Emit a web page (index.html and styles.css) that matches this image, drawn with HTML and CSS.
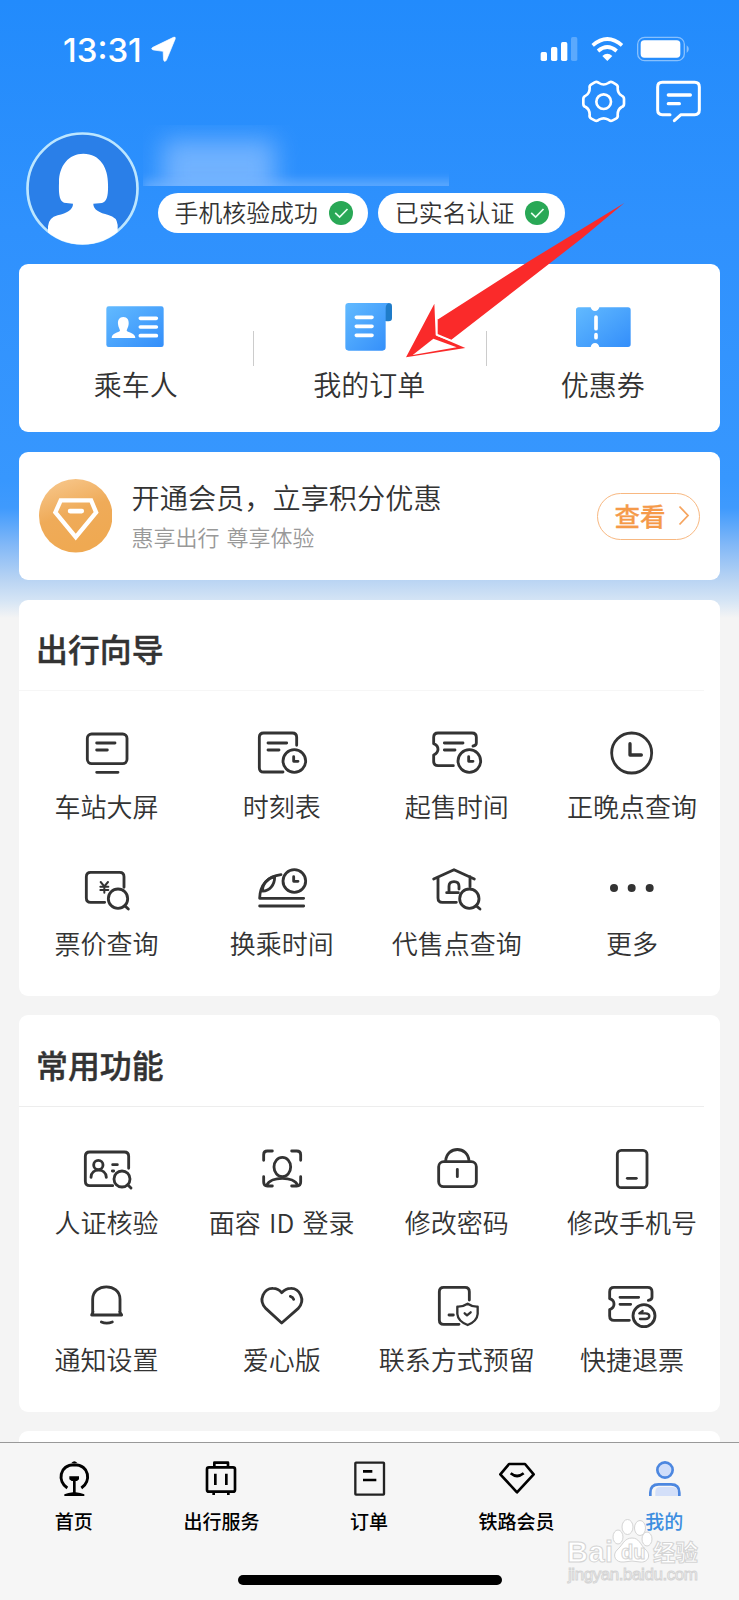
FILE: index.html
```html
<!DOCTYPE html>
<html lang="zh-CN">
<head>
<meta charset="utf-8">
<title>我的</title>
<link rel="stylesheet" href="styles.css">
</head>
<body>
<div class="phone">
  <div class="content">
    <header class="header">
      <div class="status">
        <span class="time">13:31</span>
        <svg class="locate" viewBox="450 106 80 84"><path d="M458 143 L520 113 Q527 110 525 118 L499 181 Q493 190 490 180 L489 155 L460 151 Q450 148 458 143Z" fill="#fff" stroke="#fff" stroke-width="2"/></svg>
        <svg class="signals" viewBox="510 105 480 90">
          <g fill="#fff">
            <rect x="515" y="156" width="19" height="27" rx="5"/><rect x="546" y="141" width="19" height="42" rx="5"/><rect x="576" y="126" width="19" height="57" rx="5"/>
            <rect x="606" y="111" width="19" height="72" rx="5" opacity=".25"/>
            <path d="M700 168 Q715 155 730 168 L715 183Z"/>
            <rect x="815" y="121" width="119" height="52" rx="11"/>
            <path d="M953 136 Q966 147 953 159Z" opacity=".45"/>
          </g>
          <g fill="none" stroke="#fff" stroke-width="11"><path d="M671 136 Q715 98 759 136"/><path d="M687 153 Q715 129 743 153"/></g>
          <rect x="806" y="112" width="140" height="70" rx="21" fill="none" stroke="#fff" stroke-width="4" opacity=".45"/>
        </svg>
      </div>
      <div class="actions">
        <svg viewBox="636 237 138 135" fill="none" stroke="#fff" stroke-width="8" stroke-linejoin="round"><path d="M677 247 Q684 243 690 249 Q704 258 718 249 Q724 243 731 247 L741 253 Q748 257 746 265 Q746 281 758 287 Q765 289 765 297 V311 Q765 319 758 321 Q746 328 746 344 Q748 352 741 356 L731 361 Q724 365 718 359 Q704 351 690 359 Q684 365 677 361 L667 356 Q660 352 662 344 Q662 328 650 321 Q643 319 643 311 V297 Q643 289 650 287 Q662 281 662 265 Q660 257 667 253Z"/><circle cx="704" cy="305" r="22"/></svg>
        <svg viewBox="858 237 138 135" fill="none" stroke="#fff" stroke-width="9" stroke-linecap="round" stroke-linejoin="round"><path d="M903 344 H880 Q866 344 866 330 V261 Q866 247 880 247 H977 Q991 247 991 261 V330 Q991 344 977 344 H936 L916 362"/><path d="M898 285 H964 M898 311 H931" stroke-width="10"/></svg>
      </div>
      <div class="profile">
        <svg class="avatar" viewBox="78 397 339 339"><defs><clipPath id="face"><circle cx="247.500" cy="566.500" r="168"/></clipPath></defs><circle cx="247.500" cy="566.500" r="165" fill="#2a7fe8" stroke="#bce6ff" stroke-width="8"/><g clip-path="url(#face)"><path d="M250 462 C301 462 324 505 324 553 C325 584 322 607 306 610 L280 612 C279 630 298 640 325 646 Q351 652 353 676 V740 H144 V680 Q146 654 173 647 C201 640 219 630 219 612 L192 609 C177 603 176 580 177 550 C176 500 205 462 250 462Z" fill="#fff"/></g></svg>
        <div class="info">
          <div class="masked"><i></i><b></b></div>
          <div class="badges">
            <span class="badge"><em>手机核验成功</em><svg viewBox="0 0 24 24"><circle cx="12" cy="12" r="12" fill="#29a856"/><path d="M6.200 11.800 L10.600 16 L18.500 8" fill="none" stroke="#e8fff0" stroke-width="1.700"/></svg></span>
            <span class="badge"><em>已实名认证</em><svg viewBox="0 0 24 24"><circle cx="12" cy="12" r="12" fill="#29a856"/><path d="M6.200 11.800 L10.600 16 L18.500 8" fill="none" stroke="#e8fff0" stroke-width="1.700"/></svg></span>
          </div>
        </div>
      </div>
    </header>

    <section class="card quick">
      <div class="entry">
        <svg viewBox="319 128 180 165"><defs><linearGradient id="sky" x1="0" y1="0" x2="1" y2="1"><stop offset="0" stop-color="#62baff"/><stop offset="1" stop-color="#338efa"/></linearGradient></defs><rect x="320" y="153" width="172" height="122" rx="7" fill="url(#sky)"/><path d="M371 185 C383 185 388 194 387 206 C386 216 382 220 381 226 C386 233 407 231 407 248 H336 C336 231 357 233 361 226 C360 220 356 216 355 206 C354 194 359 185 371 185Z" fill="#fff"/><path d="M422 189 H470 M422 215 H470 M422 241 H470" stroke="#fff" stroke-width="11" stroke-linecap="round"/></svg>
        <span>乘车人</span>
      </div>
      <div class="entry">
        <svg viewBox="-88 324 180 165"><rect x="45" y="339" width="26" height="55" rx="10" fill="#1f7cc9"/><path d="M-59 339 H62 Q52 342 52 355 V472 Q52 482 42 482 H-59 Q-69 482 -69 472 V349 Q-69 339 -59 339Z" fill="url(#sky)"/><path d="M-36 382 H11 M-36 409 H11 M-36 436 H11" stroke="#fff" stroke-width="11" stroke-linecap="round"/></svg>
        <span>我的订单</span>
      </div>
      <div class="entry">
        <svg viewBox="612 323 180 165"><path d="M629 351 H665 Q668 362 678 362 Q688 362 691 351 H777 Q785 351 785 359 V462 Q785 470 777 470 H691 Q688 458 678 458 Q668 458 665 470 H629 Q621 470 621 462 V359 Q621 351 629 351Z" fill="url(#sky)"/><path d="M681 380 V415 M681 433 V442" stroke="#fff" stroke-width="11" stroke-linecap="round"/></svg>
        <span>优惠券</span>
      </div>
    </section>

    <section class="card member">
      <svg class="medal" viewBox="117 673 220 220"><defs><linearGradient id="gold" x1="0" y1="0" x2=".35" y2="1"><stop offset="0" stop-color="#f8ca91"/><stop offset=".55" stop-color="#efab59"/><stop offset="1" stop-color="#efa952"/></linearGradient></defs><circle cx="227" cy="783" r="110" fill="url(#gold)"/><path d="M182 737 H273 L288 773 L227 847 L166 773Z" fill="none" stroke="#fff" stroke-width="13"/><path d="M210 769 H245" stroke="#fff" stroke-width="14" stroke-linecap="round"/></svg>
      <div class="pitch"><p class="lead">开通会员，立享积分优惠</p><p class="sub">惠享出行 尊享体验</p></div>
      <span class="view"><em>查看</em><svg viewBox="0 0 12 22"><path d="M1.500 1.500 L10 10.500 L1.500 19.500" fill="none" stroke="#f6a560" stroke-width="1.800"/></svg></span>
    </section>

    <section class="card group">
      <h2>出行向导</h2>
      <div class="grid">
        <div class="cell"><svg viewBox="225 384 192 150"><rect x="262" y="402" width="119" height="89" rx="13"/><path d="M290 429 H345 M290 450 H322 M290 517 H354"/></svg><span>车站大屏</span></div>
        <div class="cell"><svg viewBox="750 384 192 150"><path d="M890 436 V412 Q890 399 877 399 H791 Q778 399 778 412 V503 Q778 516 791 516 H849 M804 429 H860 M804 450 H837"/><circle cx="883" cy="483" r="34"/><path d="M881 470 V484 H894"/></svg><span>时刻表</span></div>
        <div class="cell"><svg viewBox="168 384 192 150"><path d="M312 438 Q322 437 322 429 V412 Q322 399 309 399 H207 Q194 399 194 412 V431 Q207 436 207 448 Q207 459 194 465 V484 Q194 497 207 497 H253 M226 429 H282 M226 450 H258"/><circle cx="301" cy="483" r="34"/><path d="M299 470 V484 H312"/></svg><span>起售时间</span></div>
        <div class="cell"><svg viewBox="693 384 192 150"><circle cx="788" cy="459" r="60"/><path d="M783 431 V465 H817" stroke-width="10"/></svg><span>正晚点查询</span></div>
        <div class="cell"><svg viewBox="225 794 192 150"><path d="M372 861 V829 Q372 816 359 816 H272 Q259 816 259 829 V893 Q259 906 272 906 H314"/><path d="M302 845 L313 858 L324 845 M313 858 V877 M301 859 H325 M301 869 H325" stroke-width="6"/><circle cx="354" cy="895" r="29"/><path d="M374 916 L385 926"/></svg><span>票价查询</span></div>
        <div class="cell"><svg viewBox="750 794 192 150"><path d="M843 823 C804 828 780 852 779 894 H911 M779 917 H911"/><path d="M824 829 C824 855 808 872 788 872 C785 853 803 833 824 829Z"/><circle cx="883" cy="842" r="34"/><path d="M881 829 V843 H894"/></svg><span>换乘时间</span></div>
        <div class="cell"><svg viewBox="168 794 192 150"><path d="M194 836 L255 808 L316 836 M207 832 V893 Q207 906 220 906 H262 M303 829 V859"/><path d="M233 877 H268 M240 877 V858 Q240 844 255 844 Q270 844 270 858 V866"/><circle cx="301" cy="895" r="29"/><path d="M321 916 L333 926"/></svg><span>代售点查询</span></div>
        <div class="cell"><svg viewBox="693 794 192 150"><g fill="#333" stroke="none"><circle cx="735" cy="863" r="12"/><circle cx="788" cy="863" r="12"/><circle cx="842" cy="863" r="12"/></g></svg><span>更多</span></div>
      </div>
    </section>

    <section class="card group common">
      <h2>常用功能</h2>
      <div class="grid">
        <div class="cell"><svg viewBox="225 402 192 150"><path d="M386 475 V439 Q386 426 373 426 H269 Q256 426 256 439 V514 Q256 527 269 527 H338"/><circle cx="295" cy="465" r="14"/><path d="M273 502 C274 473 317 473 319 502" /><path d="M338 464 H352 M337 483 H341"/><circle cx="366" cy="507" r="24"/><path d="M383 524 L393 534" /></svg><span>人证核验</span></div>
        <div class="cell"><svg viewBox="750 402 192 150"><path d="M791 451 V434 Q791 423 802 423 H817 M875 423 H890 Q902 423 902 434 V451 M791 500 V516 Q791 528 802 528 H817 M902 500 V516 Q902 528 890 528 H875"/><ellipse cx="847" cy="471" rx="25" ry="29"/><path d="M800 526 C812 498 882 498 893 526"/></svg><span class="latin">面容 ID 登录</span></div>
        <div class="cell"><svg viewBox="168 402 192 150"><rect x="209" y="455" width="113" height="75" rx="15"/><path d="M230 453 C233 407 297 407 300 453 M265 478 V500"/></svg><span>修改密码</span></div>
        <div class="cell"><svg viewBox="693 402 192 150"><rect x="745" y="421" width="89" height="112" rx="12"/><path d="M775 505 H802"/></svg><span>修改手机号</span></div>
        <div class="cell"><svg viewBox="225 812 192 150"><path d="M278 910 V867 C278 817 360 817 360 867 V910 M275 914 L279 904 M365 914 L359 904 M275 914 H365 M304 935 Q320 942 337 935"/></svg><span>通知设置</span></div>
        <div class="cell"><svg viewBox="750 812 192 150"><path d="M845 938 L798 895 C772 869 793 833 819 834 Q835 834 845 847 Q857 834 872 834 C898 833 919 869 894 895Z M871 858 Q879 860 881 867"/></svg><span>爱心版</span></div>
        <div class="cell"><svg viewBox="168 812 192 150"><path d="M301 869 V844 Q301 831 288 831 H224 Q211 831 211 844 V929 Q211 942 224 942 H270 M240 914 H253"/><path d="M265 889 Q280 890 296 880 Q311 890 326 889 V911 Q324 933 296 944 Q267 933 265 911Z M287 909 L294 915 L305 906" stroke-width="7"/></svg><span>联系方式预留</span></div>
        <div class="cell"><svg viewBox="693 812 192 150"><path d="M838 870 Q849 869 849 861 V844 Q849 831 836 831 H735 Q722 831 722 844 V865 Q735 869 735 881 Q735 893 722 898 V917 Q722 930 735 930 H781 M753 861 H809 M753 882 H785"/><circle cx="825" cy="916" r="33"/><path d="M821 902 L811 909 H829 Q841 909 841 917 Q841 926 829 926 H813" stroke-width="7"/></svg><span>快捷退票</span></div>
      </div>
    </section>
    <section class="card next"></section>
  </div>

  <nav class="tabs">
    <div class="tab"><svg viewBox="149 147 144 120"><path d="M201 234 C171 214 176 165 222 164 C268 165 273 214 243 234" stroke-width="9"/><path d="M213 159 Q222 149 231 159Z M207 199 H236 V208 L230 213 H214 L207 208Z M192 258 V253 Q204 248 218 247 V212 H226 V247 Q240 248 252 253 V258Z" fill="#000" stroke="none"/></svg><span>首页</span></div>
    <div class="tab"><svg viewBox="591 147 144 120"><rect x="621" y="172" width="84" height="73" rx="6"/><path d="M643 170 V158 H684 V170 M646 191 V225 M679 191 V225 M641 246 V255 M685 246 V255"/></svg><span>出行服务</span></div>
    <div class="tab"><svg viewBox="1034 147 144 120"><rect x="1065" y="158" width="86" height="96" stroke="#222" stroke-width="7" rx="2"/><path d="M1088 184 H1116 M1088 210 H1128"/></svg><span>订单</span></div>
    <div class="tab"><svg viewBox="371 147 144 120"><path d="M419 162 H467 L493 193 L443 247 L393 193Z M424 190 Q443 206 463 190"/></svg><span>铁路会员</span></div>
    <div class="tab active"><svg viewBox="814 147 144 120"><circle cx="889" cy="180" r="23" fill="#d0defa" stroke="#4c87e0"/><path d="M860 258 V245 Q860 231 874 231 H910 Q930 231 931 258Z" fill="#d3dff9" stroke="none"/><path d="M845 258 V248 Q845 223 870 223 H907 Q932 223 932 248 V258" stroke="#4c87e0"/></svg><span>我的</span></div>
  </nav>
  <div class="home-bar"></div>

  <svg class="arrow" viewBox="100 25 690 490"><path d="M767 40 L640 146 L248 450 L205 432 V391 L482 214Z M197 342 L201 437 L290 475 L112 503Z" fill="#fa2a2a"/><path d="M194 447 L264 473 L132 496Z" fill="#fff"/><path d="M205 391 V437 L245 452" fill="none" stroke="#fff" stroke-width="4"/></svg>

  <svg class="mark" viewBox="0 0 140 74">
    <g fill="#fff" stroke="#d4d4d4" stroke-width="1">
      <ellipse cx="53" cy="25" rx="5" ry="7"/><ellipse cx="62.500" cy="15" rx="5.500" ry="7.500"/><ellipse cx="75" cy="16" rx="5.500" ry="7.500"/><ellipse cx="82" cy="27" rx="5" ry="7"/>
      <path d="M67 26 C74 26 75 32 80 37 C87 43 83 51 75 50 Q67 48 59 50 C50 51 47 43 52 38 C58 33 59 26 67 26Z"/>
      <text x="2" y="50" class="mark-main" textLength="46">Bai</text><text x="56" y="47" class="mark-du">du</text><text x="88" y="49" class="mark-cn">经验</text>
      <text x="3" y="68" class="mark-url" textLength="130">jingyan.baidu.com</text>
    </g>
  </svg>
</div>
</body>
</html>
```
FILE: styles.css
```css
* { box-sizing: border-box; }
body { margin: 0; font-family: "Noto Sans CJK SC", sans-serif; color: #333; }
h2, p { margin: 0; }
em { font-style: normal; }
svg { display: block; flex: none; }

.phone { position: relative; width: 739px; height: 1600px; overflow: hidden; background: #f6f6f6; display: flex; flex-direction: column; }
.content {
  height: 1442px; flex: none; overflow: hidden; padding: 0 19.5px 0 19px;
  background: linear-gradient(180deg, #228bfc 0, #2f91fd 230px, #3797fe 480px, #3f9afd 508px, #82b8f7 545px, #b9d4f3 580px, #d4e4f5 600px, #f4f4f4 618px);
}

.header { height: 264px; margin: 0 -19.5px 0 -19px; }
.status { height: 80px; display: flex; align-items: flex-start; padding: 35px 40px 0 63px; }
.time { font: 500 33px/30px Inter, sans-serif; color: #fff; width: 87px; }
.locate { width: 27px; height: 28px; }
.signals { width: 160px; height: 30px; margin-left: auto; }
.actions { height: 45px; display: flex; justify-content: flex-end; gap: 28px; padding-right: 38px; }
.actions svg { width: 46px; height: 45px; margin-top: -1px; }
.profile { display: flex; padding-left: 26px; }
.avatar { width: 113px; height: 113px; margin-top: 7px; }
.info { margin-left: 4px; }
.masked { width: 306px; height: 61px; overflow: hidden; display: flex; flex-direction: column; }
.masked i { flex: none; width: 112px; height: 60px; margin: 15px 0 0 20px; background: #79b6ff; opacity: .9; filter: blur(12px); }
.masked b { flex: none; width: 330px; height: 20px; margin-top: -20px; background: #7bb7ff; opacity: .6; filter: blur(5px); }
.badges { display: flex; gap: 10px; margin: 7px 0 0 15px; }
.badge { height: 40px; border-radius: 20px; background: #fff; padding: 0 15.500px 0 16.500px; display: flex; align-items: center; gap: 11px; font-size: 23.900px; font-weight: 350; white-space: nowrap; }
.badge em { margin-top: -3px; }
.badge svg { width: 24px; height: 24px; }

.card { background: #fff; border-radius: 9px; margin-bottom: 20px; }
.quick { height: 168px; display: grid; grid-template-columns: repeat(3, 1fr); }
.entry { display: flex; flex-direction: column; align-items: center; padding-top: 34px; font-size: 28px; line-height: 40px; font-weight: 350; position: relative; }
.entry svg { width: 60px; height: 55px; margin-bottom: 11px; }
.entry + .entry::before { content: ""; position: absolute; left: 0; top: 67px; width: 1px; height: 35px; background: #ccc; }
.member { height: 128px; display: flex; align-items: center; padding: 0 20px 0 19.500px; }
.medal { width: 73.500px; height: 73.500px; }
.pitch { margin-left: 19.500px; flex: 1; }
.lead { font-size: 28.200px; line-height: 41px; font-weight: 350; margin-top: -2px; }
.sub { font-size: 22px; line-height: 38px; font-weight: 350; color: #999; word-spacing: 2px; }
.view { width: 103px; height: 47px; border: 1.500px solid #f8b881; border-radius: 24px; display: flex; align-items: center; padding-left: 17px; gap: 12px; font-size: 25.500px; font-weight: 500; color: #f59a49; }
.view em { margin-top: -3px; -webkit-text-stroke: 0.3px #f59a49; }
.view svg { width: 12px; height: 22px; }

.group { height: 396px; margin-bottom: 19px; }
.group h2 { height: 91px; margin-right: 15.500px; border-bottom: 1px solid #f6f6f6; padding: 24px 0 0 17px; font-size: 31.900px; line-height: 48px; font-weight: 500; -webkit-text-stroke: 0.4px #333; }
.grid { display: grid; grid-template-columns: repeat(4, 1fr); grid-auto-rows: 136.700px; padding-top: 37px; }
.cell { display: flex; flex-direction: column; align-items: center; font-size: 26px; line-height: 36px; font-weight: 350; white-space: nowrap; }
.cell svg { width: 64px; height: 50px; margin-bottom: 10px; fill: none; stroke: #333; stroke-width: 8.500; stroke-linecap: round; stroke-linejoin: round; }
.latin { word-spacing: 2.500px; }
.common { height: 397px; }
.common h2 { border-color: #ededed; height: 92px; padding-top: 25px; }
.next { height: 60px; }

.tabs { flex: none; height: 133px; border-top: 1px solid #999; display: grid; grid-template-columns: repeat(5, 1fr); padding: 16px 1px 0 0; color: #000; }
.tab { display: flex; flex-direction: column; align-items: center; font-size: 19px; line-height: 28px; font-weight: 500; }
.tab svg { width: 48px; height: 40px; margin-bottom: 8px; fill: none; stroke: #000; stroke-width: 8; stroke-linejoin: round; }
.active { color: #3d8ee0; }
.home-bar { width: 264px; height: 10px; border-radius: 5px; background: #000; margin-left: 238px; }

.arrow { position: absolute; left: 402.300px; top: 198.300px; width: 230px; height: 163.300px; }
.mark { position: absolute; left: 565px; top: 1512px; width: 140px; height: 74px; }
.mark-main { font: 700 29px "Liberation Sans", sans-serif; }
.mark-du { font: 700 20px "Liberation Sans", sans-serif; }
.mark-cn { font: 700 22.500px "Noto Sans CJK SC", sans-serif; }
.mark-url { font: 400 17px "Liberation Sans", sans-serif; }
```
